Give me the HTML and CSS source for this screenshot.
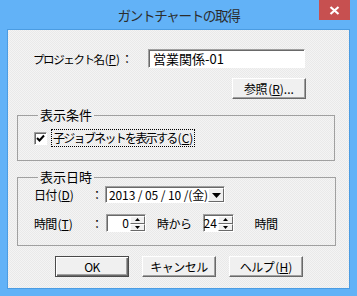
FILE: index.html
```html
<!DOCTYPE html>
<html lang="ja">
<head>
  <meta charset="UTF-8">
  <title>ガントチャートの取得</title>
  <link rel="stylesheet" href="styles.css">
</head>
<body>
  <div class="window">
    <div class="titlebar">
      <span class="title">ガントチャートの取得</span>
      <span class="close">
        <svg width="11" height="9" viewBox="0 0 11 9"><path d="M1.5 1 L9.5 8 M9.5 1 L1.5 8" stroke="#fff" stroke-width="2.2"/></svg>
      </span>
    </div>

    <div class="client">
      <div class="project-row">
        <span class="label project-label">プロジェクト名<span class="mn">(<u>P</u>)</span></span>
        <span class="colon">：</span>
        <div class="textbox">営業関係-01</div>
      </div>

      <div class="browse-row">
        <button class="btn">参照<span class="mn">(<u>R</u>)...</span></button>
      </div>

      <fieldset class="group cond">
        <legend>表示条件</legend>
        <div class="check-row">
          <span class="checkbox">
            <svg width="9" height="9" viewBox="0 0 9 9"><path d="M1 4 L3.5 6.5 L8 1.5" fill="none" stroke="#000" stroke-width="2"/></svg>
          </span>
          <span class="check-label">子ジョブネットを表示する<span class="mn">(<u>C</u>)</span></span>
        </div>
      </fieldset>

      <fieldset class="group datetime">
        <legend>表示日時</legend>
        <div class="field-row date-row">
          <span class="label">日付<span class="mn">(<u>D</u>)</span></span>
          <span class="colon">：</span>
          <div class="datepicker">
            <span class="date-text">2013 / 05 / 10 /(金)</span>
            <span class="drop-btn">
              <svg width="9" height="5" viewBox="0 0 9 5"><path d="M0 0 H9 L4.5 5 Z" fill="#000"/></svg>
            </span>
          </div>
        </div>
        <div class="field-row time-row">
          <span class="label">時間<span class="mn">(<u>T</u>)</span></span>
          <span class="colon">：</span>
          <div class="spin spin-from">
            <span class="spin-value">0</span>
            <span class="spin-btns">
              <span class="spin-btn"><svg width="5" height="3" viewBox="0 0 5 3"><path d="M0 3 H5 L2.5 0 Z" fill="#000"/></svg></span>
              <span class="spin-btn"><svg width="5" height="3" viewBox="0 0 5 3"><path d="M0 0 H5 L2.5 3 Z" fill="#000"/></svg></span>
            </span>
          </div>
          <span class="unit from-text">時から</span>
          <div class="spin spin-to">
            <span class="spin-value">24</span>
            <span class="spin-btns">
              <span class="spin-btn"><svg width="5" height="3" viewBox="0 0 5 3"><path d="M0 3 H5 L2.5 0 Z" fill="#000"/></svg></span>
              <span class="spin-btn"><svg width="5" height="3" viewBox="0 0 5 3"><path d="M0 0 H5 L2.5 3 Z" fill="#000"/></svg></span>
            </span>
          </div>
          <span class="unit hours-text">時間</span>
        </div>
      </fieldset>

      <div class="actions">
        <button class="btn default">OK</button>
        <button class="btn">キャンセル</button>
        <button class="btn">ヘルプ<span class="mn">(<u>H</u>)</span></button>
      </div>
    </div>
  </div>
</body>
</html>
```

FILE: styles.css
```css
body {
  margin: 0;
  font-family: "Noto Sans CJK JP", "DejaVu Sans", sans-serif;
  font-size: 12px;
  color: #000;
}

.window {
  width: 357px;
  height: 296px;
  box-sizing: border-box;
  background-color: #62b2f7;
  padding: 0 8px 8px 8px;
  display: flex;
  flex-direction: column;
}

.titlebar {
  height: 30px;
  display: grid;
  grid-template-columns: 1fr auto 1fr;
  align-items: start;
  margin: 0 -1px;
}

.title {
  grid-column: 2;
  font-size: 13.5px;
  line-height: 30px;
  color: #2c2c2c;
  letter-spacing: -1.3px;
}

.close {
  grid-column: 3;
  justify-self: end;
  width: 31px;
  height: 20px;
  background-color: #c75050;
  display: flex;
  align-items: center;
  justify-content: center;
}

.client {
  flex: 1;
  background-color: #efefef;
  background-image: conic-gradient(#f4f4f4 25%, #e9e9e9 0 50%, #f4f4f4 0 75%, #e9e9e9 0);
  background-size: 2px 2px;
  box-shadow: 0 0 0 1px #4b9ce2;
  padding: 19px 0 0 0;
  display: flex;
  flex-direction: column;
}

u {
  text-decoration-thickness: 1px;
  text-underline-offset: 1px;
}

/* mnemonic part like (P), keeps normal spacing */
.mn {
  letter-spacing: 0;
  margin-left: 1px;
}

.label {
  white-space: nowrap;
  letter-spacing: -0.8px;
}

.colon {
  width: 16px;
  text-align: center;
}

/* project */
.project-row {
  display: flex;
  align-items: center;
  padding-left: 25px;
  height: 19px;
}

.project-label {
  width: 86px;
  font-size: 11.5px;
  letter-spacing: -1.4px;
}

.project-row .colon {
  width: 16px;
  margin-right: 13px;
}

.textbox {
  width: 157px;
  height: 19px;
  box-sizing: border-box;
  background-color: #fff;
  border: 1px solid;
  border-color: #a0a0a0 #fff #fff #a0a0a0;
  box-shadow: inset 1px 1px #696969;
  padding: 0 4px;
  line-height: 17px;
  font-size: 13px;
}

/* buttons */
.btn {
  font-family: inherit;
  font-size: 12px;
  color: #000;
  width: 74px;
  height: 21px;
  padding: 0;
  background-color: #f0f0f0;
  border: 1px solid;
  border-color: #fff #696969 #696969 #fff;
  box-shadow: inset -1px -1px #a0a0a0;
  line-height: 17px;
  letter-spacing: -0.5px;
}

.btn.default {
  border: 1px solid #4a4a4a;
  box-shadow: inset 1px 1px #fff, inset -1px -1px #696969, inset -2px -2px #a0a0a0;
}

.browse-row {
  display: flex;
  justify-content: flex-end;
  padding-right: 43px;
  margin-top: 10px;
}

/* groups */
.group {
  margin: 9px 0 0 9px;
  padding: 0 0 0 16px;
  border: 1px solid #a0a0a0;
  min-width: 0;
}

.group legend {
  padding: 0 2px;
  margin-left: 4px;
  line-height: 14px;
  font-size: 13px;
}

.cond {
  width: 318px;
  height: 53px;
  box-sizing: border-box;
}

.check-row {
  display: flex;
  align-items: center;
  margin-top: 8px;
}

.checkbox {
  width: 13px;
  height: 13px;
  box-sizing: border-box;
  background-color: #fff;
  border: 1px solid;
  border-color: #a0a0a0 #fff #fff #a0a0a0;
  box-shadow: inset 1px 1px #696969;
  display: flex;
  align-items: center;
  justify-content: center;
}

.check-label {
  margin-left: 5px;
  outline: 1px dotted #000;
  padding: 0 1px;
  line-height: 16px;
  letter-spacing: -1.7px;
}

.datetime {
  width: 319px;
  height: 76px;
  box-sizing: border-box;
  margin-top: 9px;
}

.field-row {
  display: flex;
  align-items: center;
}

.field-row .label {
  width: 55px;
}

.date-row {
  margin-top: 2px;
  height: 17px;
}

.datepicker {
  width: 120px;
  height: 17px;
  box-sizing: border-box;
  background-color: #fff;
  border: 1px solid;
  border-color: #a0a0a0 #fff #fff #a0a0a0;
  box-shadow: inset 1px 1px #696969;
  display: flex;
  align-items: stretch;
}

.date-text {
  flex: 1;
  padding-left: 3px;
  line-height: 15px;
  white-space: nowrap;
  letter-spacing: -0.1px;
  overflow: hidden;
}

.drop-btn {
  width: 16px;
  margin: 1px 0 0 0;
  box-sizing: border-box;
  background-color: #f0f0f0;
  border: 1px solid;
  border-color: #fff #696969 #696969 #fff;
  display: flex;
  align-items: center;
  justify-content: center;
}

.time-row {
  margin-top: 11px;
  height: 18px;
}

.spin {
  height: 18px;
  box-sizing: border-box;
  background-color: #fff;
  border: 1px solid;
  border-color: #a0a0a0 #fff #fff #a0a0a0;
  box-shadow: inset 1px 1px #696969;
  display: flex;
}

.spin-from {
  width: 40px;
  margin-left: 1px;
}

.spin-to {
  width: 31px;
}

.spin-value {
  flex: 1;
  text-align: right;
  padding-right: 1px;
  line-height: 16px;
}

.spin-btns {
  width: 15px;
  padding-top: 1px;
  display: flex;
  flex-direction: column;
}

.spin-btn {
  flex: 1;
  box-sizing: border-box;
  background-color: #f0f0f0;
  border: 1px solid;
  border-color: #fff #696969 #696969 #fff;
  display: flex;
  align-items: center;
  justify-content: center;
}

.from-text {
  margin: 0 11px 0 11px;
  letter-spacing: -0.5px;
}

.hours-text {
  margin-left: 21px;
  letter-spacing: -0.5px;
}

/* bottom buttons */
.actions {
  display: flex;
  gap: 13px;
  padding-left: 47px;
  margin-top: 10px;
}
```
